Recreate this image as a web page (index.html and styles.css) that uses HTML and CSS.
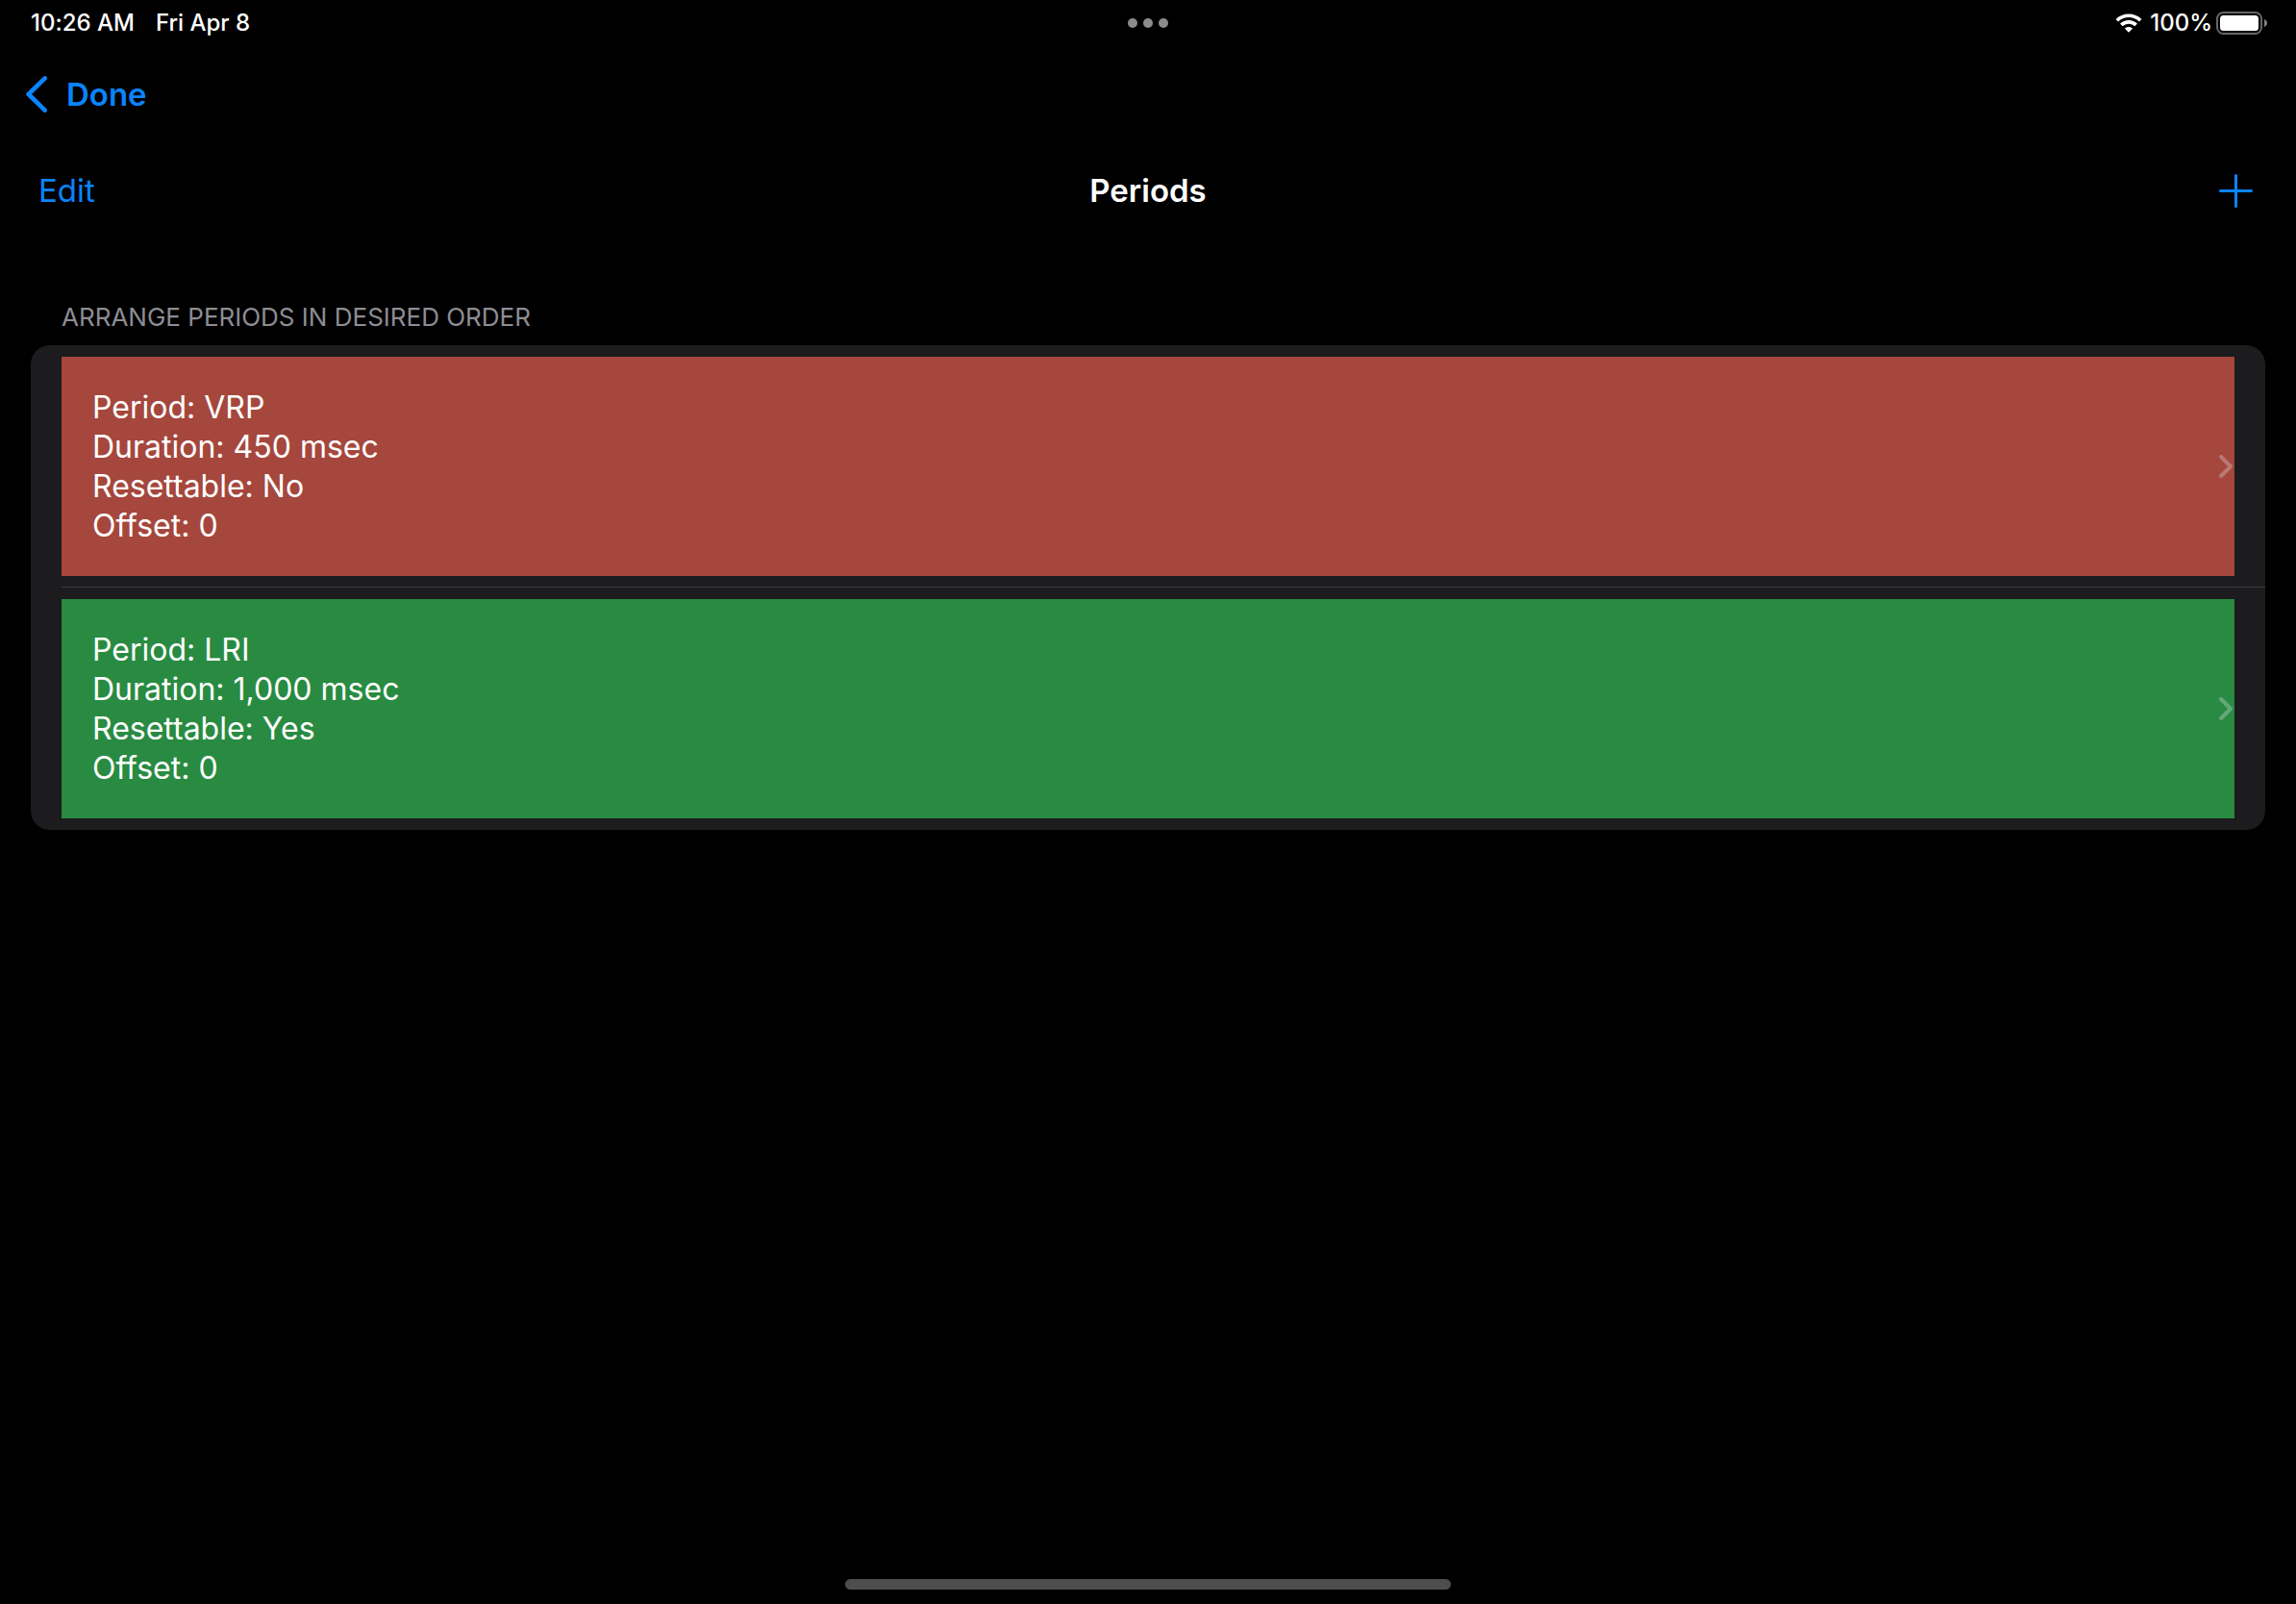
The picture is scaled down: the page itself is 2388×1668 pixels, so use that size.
FILE: index.html
```html
<!DOCTYPE html>
<html lang="en">
<head>
  <meta charset="utf-8">
  <meta name="viewport" content="width=device-width, initial-scale=1">
  <title>Periods</title>
  <link rel="stylesheet" href="styles.css">
</head>
<body>
  <div class="screen">
    <div class="status-bar">
      <div class="status-left">
        <span>10:26 AM</span>
        <span>Fri Apr 8</span>
      </div>
      <div class="multitask" aria-hidden="true">
        <span class="dot"></span><span class="dot"></span><span class="dot"></span>
      </div>
      <div class="status-right">
        <svg class="wifi" width="28" height="20" viewBox="0 0 28 20" aria-hidden="true">
          <path d="M1.8 7.2 C8.6 0.5 19.4 0.5 26.2 7.2" fill="none" stroke="#fff" stroke-width="3.6"/>
          <path d="M6.3 11.9 C10.6 7.8 17.4 7.8 21.7 11.9" fill="none" stroke="#fff" stroke-width="3.6"/>
          <path d="M14 19.8 L9.8 15.6 C12.2 13.4 15.8 13.4 18.2 15.6 Z" fill="#fff"/>
        </svg>
        <span class="charge">100%</span>
        <svg class="battery" width="54" height="24" viewBox="0 0 54 24" aria-hidden="true">
          <rect x="1" y="1" width="46" height="22" rx="6.5" fill="none" stroke="#666" stroke-width="2"/>
          <rect x="4" y="4" width="40" height="16" rx="3.5" fill="#fff"/>
          <path d="M50 8 C54 9.4 54 14.6 50 16 Z" fill="#808080"/>
        </svg>
      </div>
    </div>

    <nav class="nav-bar">
      <button class="back" type="button">
        <svg width="22" height="38" viewBox="0 0 22 38" aria-hidden="true">
          <path d="M19.7 2.4 L2.6 19 L19.7 35.6" fill="none" stroke="currentColor" stroke-width="4.6" stroke-linecap="round" stroke-linejoin="round"/>
        </svg>
        Done
      </button>
    </nav>

    <header class="title-bar">
      <button class="edit" type="button">Edit</button>
      <h1 class="title">Periods</h1>
      <button class="add" type="button" aria-label="Add period">
        <svg width="35" height="35" viewBox="0 0 35 35" aria-hidden="true">
          <path d="M17.5 1.5 V33.5 M1.5 17.5 H33.5" fill="none" stroke="currentColor" stroke-width="3" stroke-linecap="round"/>
        </svg>
      </button>
    </header>

    <main class="content">
      <h2 class="section-label">ARRANGE PERIODS IN DESIRED ORDER</h2>
      <ul class="periods">
        <li class="period-row">
          <a class="period period-red" href="#vrp">
            <span class="details">
              <span>Period: VRP</span>
              <span>Duration: 450 msec</span>
              <span>Resettable: No</span>
              <span>Offset: 0</span>
            </span>
            <svg width="14" height="24" viewBox="0 0 14 24" aria-hidden="true">
              <path d="M2 2 L12 12 L2 22" fill="none" stroke="#ebebf5" stroke-opacity="0.3" stroke-width="4" stroke-linecap="round" stroke-linejoin="round"/>
            </svg>
          </a>
        </li>
        <li class="period-row">
          <a class="period period-green" href="#lri">
            <span class="details">
              <span>Period: LRI</span>
              <span>Duration: 1,000 msec</span>
              <span>Resettable: Yes</span>
              <span>Offset: 0</span>
            </span>
            <svg width="14" height="24" viewBox="0 0 14 24" aria-hidden="true">
              <path d="M2 2 L12 12 L2 22" fill="none" stroke="#ebebf5" stroke-opacity="0.3" stroke-width="4" stroke-linecap="round" stroke-linejoin="round"/>
            </svg>
          </a>
        </li>
      </ul>
    </main>

    <div class="home-indicator" aria-hidden="true"></div>
  </div>
</body>
</html>
```

FILE: styles.css
```css
* {
  box-sizing: border-box;
}

body {
  margin: 0;
  background: #000;
  color: #fff;
  font-family: Inter, "Liberation Sans", sans-serif;
  font-size: 33px;
  font-variant-ligatures: none;
  line-height: 41px;
}

svg {
  display: block;
  flex: none;
}

button {
  margin: 0;
  padding: 0;
  border: 0;
  background: none;
  color: #0a84ff;
  font: inherit;
  cursor: pointer;
}

.screen {
  display: flex;
  flex-direction: column;
  min-height: 100vh;
}

/* Status bar */
.status-bar {
  display: grid;
  grid-template-columns: 1fr auto 1fr;
  align-items: center;
  height: 48px;
  padding: 0 29px;
  font-size: 24px;
  font-weight: 500;
  line-height: 48px;
}

.status-left {
  display: flex;
  gap: 22px;
  padding-left: 3px;
}

.multitask {
  display: flex;
  gap: 6px;
}

.dot {
  width: 10px;
  height: 10px;
  border-radius: 50%;
  background: #8c8c8c;
}

.status-right {
  display: flex;
  justify-content: flex-end;
  align-items: center;
}

.charge {
  margin: 0 4px 0 8px;
}

/* Navigation */
.nav-bar {
  display: flex;
  align-items: center;
  height: 100px;
  padding: 0 27px;
}

.back {
  display: flex;
  align-items: center;
  gap: 20px;
  font-weight: 600;
}

.title-bar {
  display: grid;
  grid-template-columns: 1fr auto 1fr;
  align-items: center;
  height: 100px;
  padding: 0 40px;
}

.edit {
  justify-self: start;
}

.title {
  margin: 0;
  font-size: 33px;
  font-weight: 600;
}

.add {
  justify-self: end;
  padding: 5px;
}

/* Period list */
.content {
  flex: 1;
  padding: 66px 32px 32px;
}

.section-label {
  margin: 0;
  padding: 0 32px 13px;
  color: #8d8d93;
  font-size: 26px;
  font-weight: 400;
  line-height: 32px;
}

.periods {
  margin: 0;
  padding: 0 0 0 32px;
  border-radius: 20px;
  background: #1c1c1e;
  list-style: none;
}

.period-row {
  padding: 12px 32px 12px 0;
}

.period-row:not(:last-child) {
  padding-bottom: 11px;
  border-bottom: 1px solid #3d3d41;
}

.period {
  display: flex;
  justify-content: space-between;
  align-items: center;
  padding: 32px 2px 32px 32px;
  color: #fff;
  font-size: 32px;
  text-decoration: none;
}

.period-red {
  background: #a5473d;
}

.period-green {
  background: #298b42;
}

.details {
  display: flex;
  flex-direction: column;
}

.home-indicator {
  align-self: center;
  width: 630px;
  max-width: 60%;
  height: 11px;
  margin-bottom: 15px;
  border-radius: 6px;
  background: #4d4d4d;
}
```
